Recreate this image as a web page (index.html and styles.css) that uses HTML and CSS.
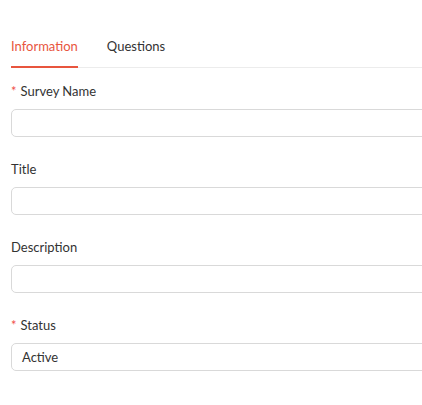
FILE: index.html
```html
<!DOCTYPE html>
<html>
<head>
<meta charset="utf-8">
<link rel="stylesheet" href="styles.css">
</head>
<body>
<div class="page">
  <div class="tabs">
    <div class="tab active">Information<span class="ink"></span></div>
    <div class="tab">Questions</div>
  </div>
  <form class="form">
    <div class="item">
      <label class="label"><span class="req">*</span>Survey Name</label>
      <div class="input"></div>
    </div>
    <div class="item">
      <label class="label">Title</label>
      <div class="input"></div>
    </div>
    <div class="item">
      <label class="label">Description</label>
      <div class="input"></div>
    </div>
    <div class="item">
      <label class="label"><span class="req">*</span>Status</label>
      <div class="input">Active</div>
    </div>
  </form>
</div>
</body>
</html>
```

FILE: styles.css
```css
html, body {
  margin: 0;
  padding: 0;
  background: #fff;
  overflow: hidden;
}
body {
  font-family: "Lato", "Noto Sans", sans-serif;
  font-size: 13px;
  color: #333;
}
.page {
  width: 460px;
  padding: 36px 0 0 11px;
}
.tabs {
  display: flex;
  gap: 29px;
  border-bottom: 1px solid #ececec;
}
.tab {
  position: relative;
  line-height: 20px;
  padding-bottom: 11px;
  color: #333;
}
.tab.active {
  color: #e8553e;
}
.ink {
  position: absolute;
  left: 0;
  right: 0;
  bottom: -1px;
  height: 2px;
  background: #e8553e;
}
.form {
  display: flex;
  flex-direction: column;
  gap: 22px;
  padding-top: 13px;
}
.item {
  display: flex;
  flex-direction: column;
}
.label {
  line-height: 20px;
  padding-bottom: 8px;
  color: #333;
}
.req {
  color: #f0504a;
  margin-right: 4px;
}
.input {
  box-sizing: border-box;
  height: 28px;
  border: 1px solid #d9d9d9;
  border-radius: 5px;
  padding: 0 10px;
  line-height: 26px;
  color: #333;
}
```
